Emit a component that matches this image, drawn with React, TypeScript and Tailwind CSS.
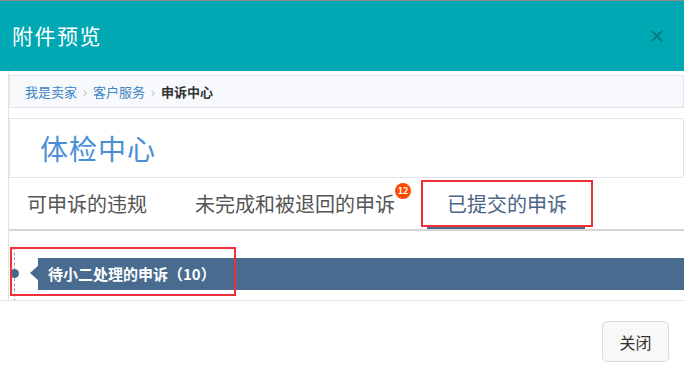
import React from 'react';

const font = { fontFamily: '"Microsoft YaHei", "Noto Sans CJK SC", "Noto Sans", sans-serif' };

function App() {
    return (
        <div className="w-[684px] h-[370px] bg-white overflow-hidden flex flex-col" style={font}>
            {/* 头部 */}
            <div className="h-[71px] shrink-0 bg-[#00a8b3] border-t border-[#8a8a8a] flex items-center justify-between pl-3 pr-[18px]">
                <div className="text-white text-[21px] tracking-[1.5px]">附件预览</div>
                <div className="text-[#0b7880] text-[18px] font-bold leading-none -mt-[3px]">×</div>
            </div>

            {/* 截图区域 */}
            <div className="h-[230px] shrink-0 overflow-hidden pl-2 border-b border-[#e4e4e4]">
                <div className="h-full border-l border-[#e2e2e2] flex flex-col">
                    <div className="mt-[4px] h-[33px] shrink-0 bg-[#f7f9fc] border border-[#dfe5ec] flex items-center pl-[15px] text-[13px] gap-[6px]">
                        <span className="text-[#3c84c6]">我是卖家</span>
                        <span className="text-[#b5b5b5] text-[13px]">›</span>
                        <span className="text-[#3c84c6]">客户服务</span>
                        <span className="text-[#b5b5b5] text-[13px]">›</span>
                        <span className="text-[#333] font-bold">申诉中心</span>
                    </div>
                    <div className="mt-[10px] h-[60px] shrink-0 border border-[#dfe5ec] flex items-center pl-[30px]">
                        <span className="text-[#4a8fd6] text-[28px] tracking-[1px]">体检中心</span>
                    </div>
                    <div className="h-[53px] shrink-0 flex items-center border-b-2 border-[#d6d6d6]">
                        <div className="pl-[18px] text-[20px] text-[#555]">可申诉的违规</div>
                        <div className="ml-[48px] text-[20px] text-[#555] relative">
                            未完成和被退回的申诉
                            <span className="absolute -right-[16px] -top-[6px] w-[16px] h-[16px] rounded-full bg-[#ff4a00] text-white text-[9px] font-bold flex items-center justify-center">12</span>
                        </div>
                        <div className="ml-[26px] w-[172px] h-[47px] border-2 border-[#ee2f3a] flex items-center justify-center text-[20px] text-[#4a6585] relative">
                            已提交的申诉
                            <span className="absolute left-[4px] right-[6px] -bottom-[4px] h-[2px] bg-[#4a6a8c]"></span>
                        </div>
                    </div>
                    <div className="relative mt-[16px] h-[60px] shrink-0">
                        <div className="absolute left-[5px] top-0 bottom-0 border-l border-dashed border-[#9a9a9a]"></div>
                        <div className="absolute left-[1px] top-[22px] w-[9px] h-[9px] rounded-full bg-[#456a8e]"></div>
                        <div className="absolute left-[21px] top-[18px] w-0 h-0 border-y-[8px] border-y-transparent border-r-[9px] border-r-[#456a8e]"></div>
                        <div className="absolute left-[29px] right-0 top-[11px] h-[32px] bg-[#486b8f] flex items-center pl-[10px] text-white text-[15px] font-bold">
                            待小二处理的申诉（10）
                        </div>
                        <div className="absolute left-[1px] top-0 w-[226px] h-[49px] border-2 border-[#ee2f3a]"></div>
                    </div>
                </div>
            </div>

            {/* 底部 */}
            <div className="flex-1 flex justify-end items-start pt-[20px] pr-[15px]">
                <button className="w-[67px] h-[41px] rounded-[5px] border border-[#dcdcdc] bg-[#f8f8f8] text-[16px] text-[#333]">
                    关闭
                </button>
            </div>
        </div>
    );
}

export default App;
